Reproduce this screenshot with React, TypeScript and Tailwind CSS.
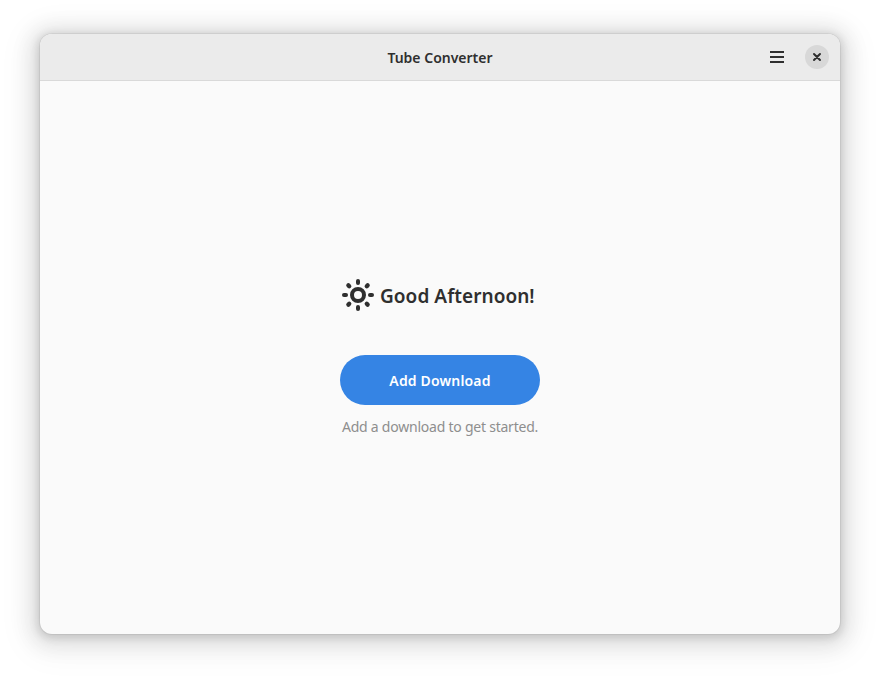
const RAYS = [0, 45, 90, 135, 180, 225, 270, 315];

function SunIcon() {
  return (
    <svg className="h-8 w-8 shrink-0" viewBox="0 0 32 32" fill="none" stroke="#2f2f2f" strokeWidth="4" strokeLinecap="round">
      <circle cx="16" cy="16" r="6" />
      {RAYS.map((angle) => (
        <path key={angle} d={angle % 90 ? "M16 3.6V2.4" : "M16 4V2"} strokeWidth={angle % 90 ? 4.3 : 4} transform={`rotate(${angle} 16 16)`} />
      ))}
    </svg>
  );
}

export default function App() {
  return (
    <div className="h-[680px] w-[880px] overflow-hidden bg-white px-10 pt-[34px] font-['Noto_Sans',sans-serif] text-[#2f2f2f]">
      <main className="flex h-[600px] w-[800px] flex-col overflow-hidden rounded-xl bg-[#fafafa] shadow-[0_2px_8px_2px_rgba(0,0,0,0.13),0_3px_20px_10px_rgba(0,0,0,0.09),0_6px_32px_16px_rgba(0,0,0,0.04),0_0_0_1px_rgba(0,0,0,0.05)]">
        <header className="grid h-[47px] shrink-0 grid-cols-[1fr_auto_1fr] items-center border-b border-[#d9d9d9] bg-[#ebebeb]">
          <span />
          <h1 className="pt-[2px] text-[14px] leading-5 font-semibold whitespace-nowrap">Tube Converter</h1>
          <div className="flex items-center justify-end gap-5 pr-[11px]">
            <button aria-label="Main menu" className="flex h-6 w-4 items-center">
              <svg className="h-4 w-4" viewBox="0 0 16 16" fill="#2f2f2f">
                <path d="M1 2h14v2H1zM1 7h14v2H1zM1 12h14v2H1z" />
              </svg>
            </button>
            <button aria-label="Close" className="flex h-6 w-6 items-center justify-center rounded-full bg-[#d8d8d8]">
              <svg className="h-4 w-4" viewBox="0 0 16 16" stroke="#2f2f2f" strokeWidth="2" strokeLinecap="round">
                <path d="m5 5 6 6M11 5l-6 6" />
              </svg>
            </button>
          </div>
        </header>
        <section className="flex flex-1 flex-col items-center pt-[198px]">
          <div className="flex h-8 w-[196px] items-center gap-[6px]">
            <SunIcon />
            <h2 className="pt-[2px] text-[19px] leading-7 font-semibold tracking-[0.05px] whitespace-nowrap">Good Afternoon!</h2>
          </div>
          <button className="mt-11 h-[50px] w-[200px] rounded-full bg-[#3584e4] pt-px text-[14px] font-semibold tracking-[0.17px] text-white">
            Add Download
          </button>
          <p className="mt-3 text-[14px] leading-5 tracking-[-0.23px] whitespace-nowrap text-[#8e8e8e]">Add a download to get started.</p>
        </section>
      </main>
    </div>
  );
}
